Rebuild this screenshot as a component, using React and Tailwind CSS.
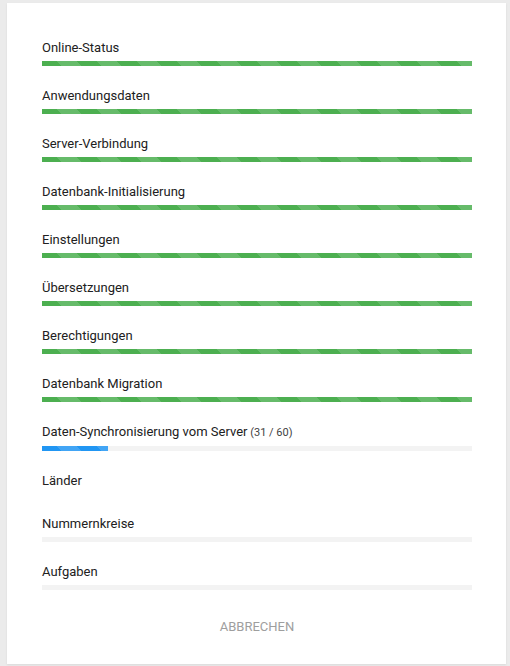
const steps = [
  { label: "Online-Status", state: "done" },
  { label: "Anwendungsdaten", state: "done" },
  { label: "Server-Verbindung", state: "done" },
  { label: "Datenbank-Initialisierung", state: "done" },
  { label: "Einstellungen", state: "done" },
  { label: "Übersetzungen", state: "done" },
  { label: "Berechtigungen", state: "done" },
  { label: "Datenbank Migration", state: "done" },
  { label: "Daten-Synchronisierung vom Server", count: "(31 / 60)", state: "active", width: 66 },
  { label: "Länder", state: "none" },
  { label: "Nummernkreise", state: "pending" },
  { label: "Aufgaben", state: "pending" },
];

const StepBar = ({ step }) => {
  if (step.state === "none") return <div className="h-0" />;
  if (step.state === "done")
    return (
      <div className="h-[5px] bg-[repeating-linear-gradient(45deg,#4caf50_0,#4caf50_14.14px,#66bb6a_14.14px,#66bb6a_28.28px)]" />
    );
  return (
    <div className="h-[5px] bg-[#f3f3f3]">
      {step.state === "active" && (
        <div
          className="h-full bg-[repeating-linear-gradient(45deg,#2196f3_0,#2196f3_14.14px,#42a5f5_14.14px,#42a5f5_28.28px)]"
          style={{ width: step.width }}
        />
      )}
    </div>
  );
};

const App = () => {
  return (
    <div className="min-h-[666px] bg-[#ebebeb] pt-[3px] font-['Roboto',sans-serif]">
      <div className="ml-[7px] w-[499px] bg-white pl-[35px] pr-[34px] pt-[37px] pb-[29px] shadow-[0_1px_2px_rgba(0,0,0,0.08)]">
        {steps.map((step) => (
          <div key={step.label} className="mb-[22px] flex flex-col gap-[5px]">
            <div className="text-[13px] leading-[16px] text-[#212121]">
              {step.label}
              {step.count && <span className="text-[11px] text-[#424242]"> {step.count}</span>}
            </div>
            <StepBar step={step} />
          </div>
        ))}

        {/* Cancel */}
        <div className="mt-[29px] flex justify-center">
          <button className="text-[13px] leading-[16px] uppercase text-[#9e9e9e]">
            Abbrechen
          </button>
        </div>
      </div>
    </div>
  );
};

export default App;
